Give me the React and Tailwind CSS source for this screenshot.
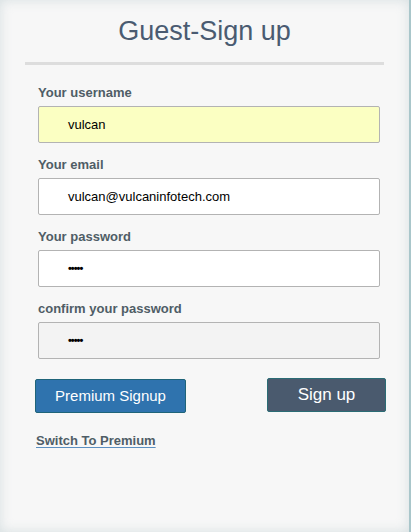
const fields = [
  { label: 'Your username', value: 'vulcan', type: 'text', bg: 'bg-[#fbffc2]' },
  { label: 'Your email', value: 'vulcan@vulcaninfotech.com', type: 'text', bg: 'bg-white' },
  { label: 'Your password', value: '•••••', type: 'password', bg: 'bg-white' },
  { label: 'confirm your password', value: '•••••', type: 'password', bg: 'bg-[#f3f3f3]' },
];

const App = () => {
  return (
    <div className="w-[411px] h-[532px] bg-[#f7f7f7] font-['Liberation_Sans',Arial,sans-serif] border-r-2 border-[#a9c6ca] shadow-[inset_0_0_12px_rgba(140,170,175,0.3)] overflow-hidden">
      {/* Titulo */}
      <h1 className="pt-[14px] text-center text-[27px] leading-[34px] text-[#4a5b71]">Guest-Sign up</h1>
      <div className="mx-[25px] mt-[14px] h-[3px] bg-[#dddddd]" />

      {/* Campos */}
      <div className="ml-[38px] mr-[29px] mt-[20px] flex flex-col">
        {fields.map((f) => (
          <div key={f.label} className="mb-[14px]">
            <label className="block text-[13px] leading-[15px] font-bold text-[#4f5d66] mb-[6px]">{f.label}</label>
            <div
              className={`h-[37px] ${f.bg} border border-[#b3b3b3] rounded-[2px] flex items-center pl-[29px] text-[13px] text-black`}
            >
              {f.type === 'password' ? (
                <span className="text-[11px] tracking-[-1px] font-bold">{f.value}</span>
              ) : (
                f.value
              )}
            </div>
          </div>
        ))}
      </div>

      {/* Botones */}
      <div className="ml-[35px] mr-[23px] mt-[5px] flex justify-between items-start">
        <button className="w-[151px] h-[34px] mt-[1px] bg-[#2f73ae] border border-[#1f6479] rounded-[2px] text-white text-[15px]">
          Premium Signup
        </button>
        <button className="w-[119px] h-[34px] bg-[#4a5a6e] border border-[#2b6c75] rounded-[2px] text-white text-[17px]">
          Sign up
        </button>
      </div>

      <a className="block ml-[36px] mt-[18px] w-fit text-[13px] font-bold text-[#4f5d66] underline decoration-[#5b8fc0] underline-offset-2">
        Switch To Premium
      </a>
    </div>
  );
};

export default App;
